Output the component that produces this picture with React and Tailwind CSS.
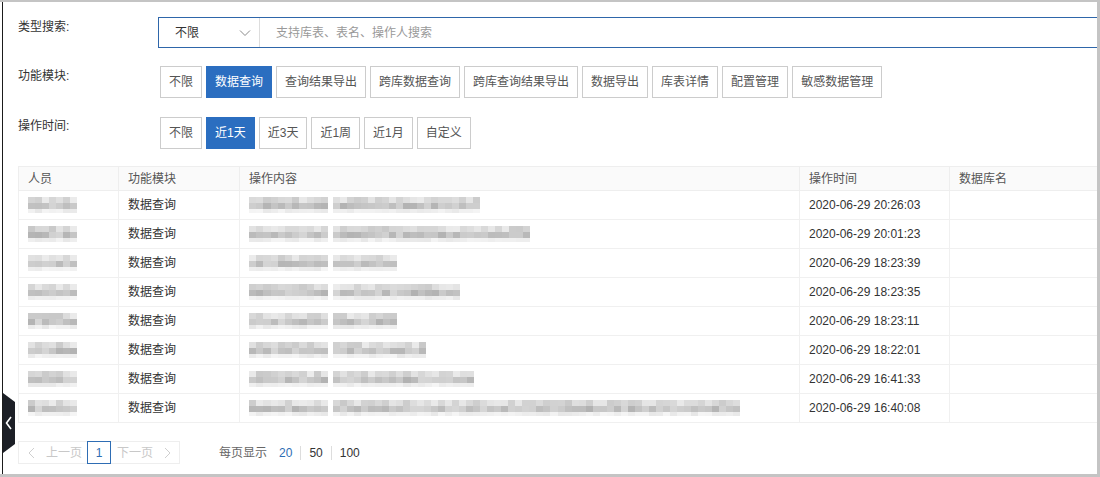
import { useMemo } from 'react'

const modules = ['不限', '数据查询', '查询结果导出', '跨库数据查询', '跨库查询结果导出', '数据导出', '库表详情', '配置管理', '敏感数据管理']
const times = ['不限', '近1天', '近3天', '近1周', '近1月', '自定义']

const rows = [
  { time: '2020-06-29 20:26:03', end: 480 },
  { time: '2020-06-29 20:01:23', end: 530 },
  { time: '2020-06-29 18:23:39', end: 397 },
  { time: '2020-06-29 18:23:35', end: 460 },
  { time: '2020-06-29 18:23:11', end: 397 },
  { time: '2020-06-29 18:22:01', end: 426 },
  { time: '2020-06-29 16:41:33', end: 474 },
  { time: '2020-06-29 16:40:08', end: 740 },
]

// petit générateur déterministe pour les pixels floutés
function rand(seed) {
  let s = seed
  return () => {
    s = (s * 9301 + 49297) % 233280
    return s / 233280
  }
}

function Mosaic({ width, seed }) {
  const cells = useMemo(() => {
    const r = rand(seed)
    const n = Math.max(1, Math.round(width / 7))
    return [0, 1, 2].map(row =>
      Array.from({ length: n }, () => {
        const base = row === 2 ? 238 : row === 0 ? 218 : 196
        const v = Math.round(base + (r() - 0.5) * (row === 2 ? 14 : 36))
        const c = Math.min(248, Math.max(160, v))
        return `rgb(${c},${c},${c})`
      })
    )
  }, [width, seed])
  return (
    <div className="flex flex-col shrink-0" style={{ width }}>
      {cells.map((row, i) => (
        <div key={i} className={`flex ${i === 2 ? 'h-[4px]' : 'h-[6px]'}`}>
          {row.map((c, j) => (
            <div key={j} className="flex-1" style={{ backgroundColor: c }} />
          ))}
        </div>
      ))}
    </div>
  )
}

function Btn({ label, active }) {
  return (
    <div
      className={`h-[32px] px-[8px] flex items-center border text-[12px] ${
        active ? 'bg-[#2b6ec0] border-[#2b6ec0] text-white' : 'bg-white border-[#cccccc] text-[#555]'
      }`}
    >
      {label}
    </div>
  )
}

export default function App() {
  return (
    <div
      className="relative w-[1100px] h-[477px] overflow-hidden bg-white border-t-[2px] border-r-[3px] border-b-[3px] border-[#c4c4c4]"
      style={{ fontFamily: '"Liberation Sans", "Noto Sans CJK SC", sans-serif' }}
    >
      <div className="ml-[2px] h-full border-l border-[#1b1b1b] pl-[15px] pt-[15px] text-[#333]">
        {/* type search */}
        <div className="flex">
          <div className="w-[140px] shrink-0 text-[12px] pt-[1px]">类型搜索:</div>
          <div className="flex shrink-0 h-[31px] w-[960px] border border-[#2e66aa]">
            <div className="w-[101px] flex items-center justify-between pl-[16px] pr-[8px] border-r border-[#dddddd] text-[12px]">
              <span>不限</span>
              <svg width="12" height="8" viewBox="0 0 12 8" fill="none">
                <path d="M1 1.5L6 6.5L11 1.5" stroke="#8a8a8a" strokeWidth="1" />
              </svg>
            </div>
            <div className="flex items-center pl-[16px] text-[12px] text-[#999]">支持库表、表名、操作人搜索</div>
          </div>
        </div>

        {/* modules */}
        <div className="flex mt-[18px]">
          <div className="w-[142px] shrink-0 text-[12px] pt-[1px]">功能模块:</div>
          <div className="flex gap-[4px]">
            {modules.map((m, i) => <Btn key={m} label={m} active={i === 1} />)}
          </div>
        </div>

        {/* time */}
        <div className="flex mt-[19px]">
          <div className="w-[142px] shrink-0 text-[12px]">操作时间:</div>
          <div className="flex gap-[4px]">
            {times.map((t, i) => <Btn key={t} label={t} active={i === 1} />)}
          </div>
        </div>

        {/* table */}
        <div className="mt-[17px] w-[1090px] text-[12px]">
          <div className="flex h-[25px] bg-[#fafafa] border border-[#eeeeee] text-[#555]">
            <div className="w-[100px] pl-[9px] flex items-center border-r border-[#eeeeee]">人员</div>
            <div className="w-[121px] pl-[9px] flex items-center border-r border-[#eeeeee]">功能模块</div>
            <div className="w-[560px] pl-[9px] flex items-center border-r border-[#eeeeee]">操作内容</div>
            <div className="w-[150px] pl-[9px] flex items-center border-r border-[#eeeeee]">操作时间</div>
            <div className="flex-1 pl-[9px] flex items-center">数据库名</div>
          </div>
          {rows.map((r, i) => (
            <div key={i} className="flex h-[29px] border-x border-b border-[#f0f0f0]">
              <div className="w-[100px] pl-[9px] flex items-center border-r border-[#f0f0f0]">
                <Mosaic width={49} seed={i * 17 + 3} />
              </div>
              <div className="w-[121px] pl-[9px] flex items-center border-r border-[#f0f0f0]">数据查询</div>
              <div className="w-[560px] pl-[9px] flex items-center gap-[5px] border-r border-[#f0f0f0]">
                <Mosaic width={79} seed={i * 31 + 7} />
                <Mosaic width={r.end - 333} seed={i * 53 + 11} />
              </div>
              <div className="w-[150px] pl-[9px] flex items-center border-r border-[#f0f0f0]">{r.time}</div>
              <div className="flex-1" />
            </div>
          ))}
        </div>

        {/* pagination */}
        <div className="flex items-center mt-[18px] text-[12px]">
          <div className="flex items-stretch h-[23px] w-[162px] border border-[#eeeeee] text-[#c8c8c8]">
            <div className="w-[68px] flex items-center gap-[11px] pl-[9px]">
              <svg width="7" height="12" viewBox="0 0 7 12" fill="none">
                <path d="M6 1L1 6L6 11" stroke="#cfcfcf" strokeWidth="1" />
              </svg>
              <span>上一页</span>
            </div>
            <div className="w-[24px] flex items-center justify-center border border-[#2e6db4] text-[#2e6db4] -my-px">1</div>
            <div className="flex items-center gap-[11px] pl-[6px]">
              <span>下一页</span>
              <svg width="7" height="12" viewBox="0 0 7 12" fill="none">
                <path d="M1 1L6 6L1 11" stroke="#cfcfcf" strokeWidth="1" />
              </svg>
            </div>
          </div>
          <div className="ml-[39px] flex items-center text-[#666]">
            <span>每页显示</span>
            <span className="ml-[12px] text-[#2e6db4]">20</span>
            <span className="mx-[8px] w-px h-[14px] bg-[#dddddd]" />
            <span className="text-[#333]">50</span>
            <span className="mx-[8px] w-px h-[14px] bg-[#dddddd]" />
            <span className="text-[#333]">100</span>
          </div>
        </div>
      </div>

      {/* side collapse tab */}
      <svg className="absolute left-[3px] top-[391px]" width="13" height="60" viewBox="0 0 13 60">
        <path d="M0 0L12 9V51L0 60Z" fill="#1c1f26" />
        <path d="M8 24L3.5 30L8 36" stroke="#fff" strokeWidth="1.6" fill="none" />
      </svg>
    </div>
  )
}
